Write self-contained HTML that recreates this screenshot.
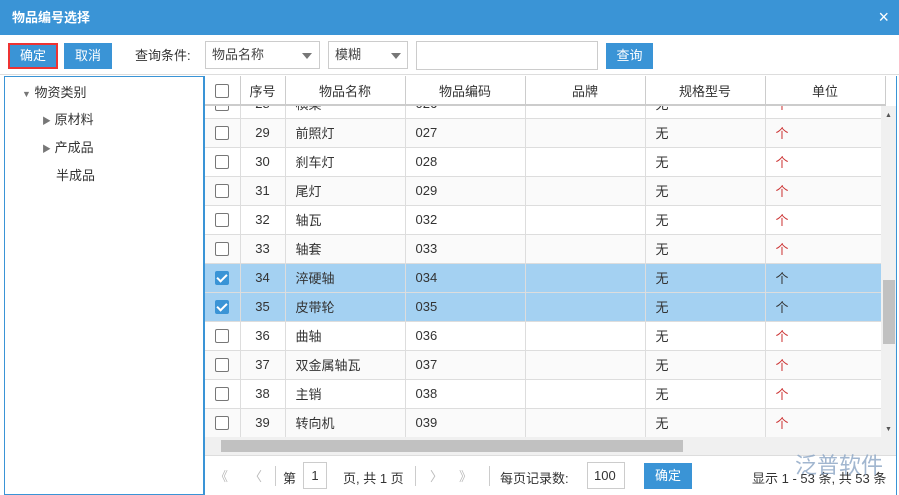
<!DOCTYPE html>
<html><head><meta charset="utf-8"><style>
*{margin:0;padding:0;box-sizing:border-box}
body{width:899px;height:495px;overflow:hidden;background:#fff;font-family:"Liberation Sans","Noto Sans CJK SC",sans-serif;font-size:13px;color:#333;position:relative}
.a{position:absolute}
.title{left:0;top:0;width:899px;height:35px;background:#3a94d6;color:#fff;font-weight:bold;font-size:13px;line-height:35px;padding-left:12px}
.btn{background:#3a94d6;color:#fff;text-align:center;line-height:26px;height:26px}
.sel{border:1px solid #ccc;height:28px;line-height:26px;padding-left:6px;color:#444}
.tri{position:absolute;border-left:5px solid transparent;border-right:5px solid transparent;border-top:6px solid #777;top:11px}
table{border-collapse:collapse;table-layout:fixed}
td{border-right:1px solid #ddd;border-bottom:1px solid #ddd;height:29px;padding:0 10px;white-space:nowrap;overflow:hidden}
.cb{width:14px;height:14px;border:1px solid #777;border-radius:2px;background:#fff;display:inline-block;vertical-align:middle}
.ck{background:#3a94d6;border-color:#3a94d6;position:relative}
.ck:after{content:"";position:absolute;left:3px;top:0px;width:4px;height:8px;border:solid #fff;border-width:0 2px 2px 0;transform:rotate(45deg)}
tr.s td{background:#a4d1f2}
.u{color:#c33}
</style></head><body>
<div class="a title">物品编号选择<span style="position:absolute;right:10px;top:0;font-weight:normal;font-size:18px">×</span></div>
<div class="a" style="left:0;top:35px;width:899px;height:40px;background:#fff;border-bottom:1px solid #ddd"></div>
<div class="a btn" style="left:8px;top:43px;width:50px;height:26px;border:2px solid #e33;line-height:22px">确定</div>
<div class="a btn" style="left:64px;top:43px;width:48px">取消</div>
<div class="a" style="left:135px;top:43px;line-height:26px;color:#333">查询条件:</div>
<div class="a sel" style="left:205px;top:41px;width:115px">物品名称<span class="tri" style="left:96px"></span></div>
<div class="a sel" style="left:328px;top:41px;width:80px">模糊<span class="tri" style="left:62px"></span></div>
<div class="a" style="left:416px;top:41px;width:182px;height:29px;border:1px solid #ccc"></div>
<div class="a btn" style="left:606px;top:43px;width:47px">查询</div>
<div class="a" style="left:4px;top:76px;width:201px;height:419px;border:1px solid #3a94d6;border-right:2px solid #3a94d6"></div>
<div class="a" style="left:22px;top:85px;line-height:16px"><span style="font-size:9px;color:#777">▼</span> 物资类别</div>
<div class="a" style="left:42px;top:112px;line-height:16px"><span style="font-size:9px;color:#777">▶</span> 原材料</div>
<div class="a" style="left:42px;top:140px;line-height:16px"><span style="font-size:9px;color:#777">▶</span> 产成品</div>
<div class="a" style="left:56px;top:168px;line-height:16px">半成品</div>
<div class="a" style="left:205px;top:76px;width:692px;height:419px;border-right:1px solid #3a94d6;overflow:hidden">
<table style="position:absolute;left:0;top:0;width:680px;background:#fff">
<colgroup><col style="width:35px"><col style="width:45px"><col style="width:120px"><col style="width:120px"><col style="width:120px"><col style="width:120px"><col style="width:120px"></colgroup>
<tr style="background:#fff"><td style="height:29px;border-bottom:2px solid #ccc;border-right-color:#ccc;text-align:center;padding:0"><span class="cb"></span></td><td style="text-align:center;padding:0;border-bottom:2px solid #ccc;border-right-color:#ccc">序号</td><td style="text-align:center;border-bottom:2px solid #ccc;border-right-color:#ccc">物品名称</td><td style="text-align:center;border-bottom:2px solid #ccc;border-right-color:#ccc">物品编码</td><td style="text-align:center;border-bottom:2px solid #ccc;border-right-color:#ccc">品牌</td><td style="text-align:center;border-bottom:2px solid #ccc;border-right-color:#ccc">规格型号</td><td style="text-align:center;border-bottom:2px solid #ccc;border-right-color:#ccc">单位</td></tr>
</table>
<div class="a" style="left:0;top:30px;width:676px;height:331px;overflow:hidden">
<table style="position:absolute;left:0;top:-17px;width:680px">
<colgroup><col style="width:35px"><col style="width:45px"><col style="width:120px"><col style="width:120px"><col style="width:120px"><col style="width:120px"><col style="width:120px"></colgroup>
<tr><td style="text-align:center;padding:0"><span class="cb"></span></td><td style="text-align:center;padding:0">28</td><td>横梁</td><td>026</td><td></td><td>无</td><td class="u">个</td></tr>
<tr style="background:#fafafa"><td style="text-align:center;padding:0"><span class="cb"></span></td><td style="text-align:center;padding:0">29</td><td>前照灯</td><td>027</td><td></td><td>无</td><td class="u">个</td></tr>
<tr><td style="text-align:center;padding:0"><span class="cb"></span></td><td style="text-align:center;padding:0">30</td><td>刹车灯</td><td>028</td><td></td><td>无</td><td class="u">个</td></tr>
<tr style="background:#fafafa"><td style="text-align:center;padding:0"><span class="cb"></span></td><td style="text-align:center;padding:0">31</td><td>尾灯</td><td>029</td><td></td><td>无</td><td class="u">个</td></tr>
<tr><td style="text-align:center;padding:0"><span class="cb"></span></td><td style="text-align:center;padding:0">32</td><td>轴瓦</td><td>032</td><td></td><td>无</td><td class="u">个</td></tr>
<tr style="background:#fafafa"><td style="text-align:center;padding:0"><span class="cb"></span></td><td style="text-align:center;padding:0">33</td><td>轴套</td><td>033</td><td></td><td>无</td><td class="u">个</td></tr>
<tr class="s"><td style="text-align:center;padding:0"><span class="cb ck"></span></td><td style="text-align:center;padding:0">34</td><td>淬硬轴</td><td>034</td><td></td><td>无</td><td>个</td></tr>
<tr class="s"><td style="text-align:center;padding:0"><span class="cb ck"></span></td><td style="text-align:center;padding:0">35</td><td>皮带轮</td><td>035</td><td></td><td>无</td><td>个</td></tr>
<tr><td style="text-align:center;padding:0"><span class="cb"></span></td><td style="text-align:center;padding:0">36</td><td>曲轴</td><td>036</td><td></td><td>无</td><td class="u">个</td></tr>
<tr style="background:#fafafa"><td style="text-align:center;padding:0"><span class="cb"></span></td><td style="text-align:center;padding:0">37</td><td>双金属轴瓦</td><td>037</td><td></td><td>无</td><td class="u">个</td></tr>
<tr><td style="text-align:center;padding:0"><span class="cb"></span></td><td style="text-align:center;padding:0">38</td><td>主销</td><td>038</td><td></td><td>无</td><td class="u">个</td></tr>
<tr style="background:#fafafa"><td style="text-align:center;padding:0"><span class="cb"></span></td><td style="text-align:center;padding:0">39</td><td>转向机</td><td>039</td><td></td><td>无</td><td class="u">个</td></tr>
<tr><td></td><td></td><td></td><td></td><td></td><td></td><td></td></tr>
</table></div>
<div class="a" style="left:676px;top:30px;width:16px;height:331px;background:#f0f0f0"><div style="position:absolute;top:174px;left:2px;width:12px;height:64px;background:#c1c1c1"></div><div style="position:absolute;top:6px;left:4px;font-size:7px;color:#555">▲</div><div style="position:absolute;bottom:4px;left:4px;font-size:7px;color:#555">▼</div></div>
<div class="a" style="left:0;top:361px;width:692px;height:18px;background:#f0f0f0"><div style="position:absolute;left:16px;top:3px;width:462px;height:12px;background:#c1c1c1"></div></div>
<div class="a" style="left:0;top:379px;width:692px;height:40px;border-top:1px solid #ddd;color:#333">
<span class="a" style="left:10px;top:10px;color:#bbb">《</span>
<span class="a" style="left:44px;top:10px;color:#bbb">〈</span>
<span class="a" style="left:70px;top:10px;height:20px;border-left:1px solid #ccc"></span>
<span class="a" style="left:78px;top:12px">第</span>
<span class="a" style="left:98px;top:6px;width:24px;height:27px;border:1px solid #ccc;text-align:center;line-height:25px">1</span>
<span class="a" style="left:138px;top:12px">页, 共 1 页</span>
<span class="a" style="left:210px;top:10px;height:20px;border-left:1px solid #ccc"></span>
<span class="a" style="left:225px;top:10px;color:#bbb">〉</span>
<span class="a" style="left:254px;top:10px;color:#bbb">》</span>
<span class="a" style="left:284px;top:10px;height:20px;border-left:1px solid #ccc"></span>
<span class="a" style="left:295px;top:12px">每页记录数:</span>
<span class="a" style="left:382px;top:6px;width:38px;height:27px;border:1px solid #ccc;line-height:25px;padding-left:6px">100</span>
<span class="a btn" style="left:439px;top:7px;width:48px">确定</span>
<span class="a" style="left:547px;top:12px">显示 1 - 53 条, 共 53 条</span>
<span class="a" style="left:590px;top:-8px;font-size:22px;color:#8aa4c4;opacity:.8">泛普软件</span>
</div>
</div>
</body></html>
